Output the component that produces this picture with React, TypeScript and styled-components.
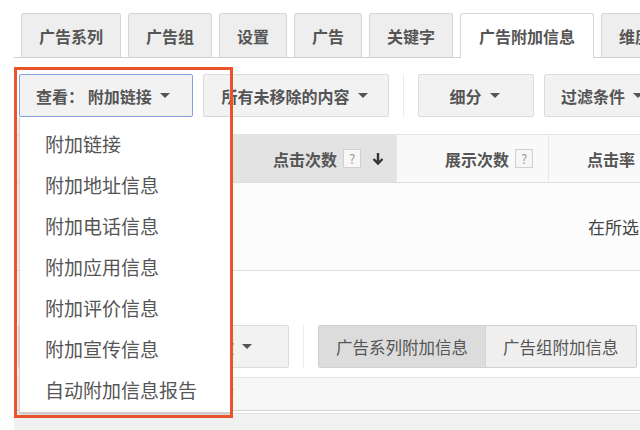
import React from "react";
import styled, { createGlobalStyle } from "styled-components";

const GlobalStyle = createGlobalStyle`
  html, body {
    margin: 0;
    padding: 0;
    background: #fff;
  }
  body {
    font-family: "Noto Sans CJK SC", "Noto Sans", sans-serif;
    color: #555;
    overflow: hidden;
  }
`;

const Page = styled.div`
  position: relative;
  width: 640px;
  height: 430px;
  overflow: hidden;
  box-sizing: border-box;
  padding: 13px 0 0 14px;
  white-space: nowrap;
`;

const TabBar = styled.div`
  display: flex;
  gap: 7px;
  padding-left: 7px;
  height: 44px;
  width: 720px;
  border-bottom: 1px solid #d0d0d0;
`;

const Tab = styled.div<{ $active?: boolean }>`
  position: relative;
  box-sizing: border-box;
  height: ${(p) => (p.$active ? "45px" : "44px")};
  padding: 0 ${(p) => (p.$active ? 18 : 17)}px;
  display: flex;
  align-items: center;
  font-size: 16px;
  font-weight: bold;
  color: #555;
  border: 1px solid #d6d6d6;
  border-bottom: none;
  border-radius: 3px 3px 0 0;
  background: ${(p) => (p.$active ? "#fff" : "#eeeeee")};
`;

const Toolbar = styled.div`
  display: flex;
  align-items: center;
  gap: 10px;
  margin-top: 16px;
  padding-left: 5px;
  height: 43px;
  width: 800px;
`;

const ToolButton = styled.div<{ $focused?: boolean; $width?: number; $align?: "start" | "end" }>`
  box-sizing: border-box;
  flex: none;
  width: ${(p) => (p.$width ? `${p.$width}px` : "auto")};
  height: 43px;
  display: flex;
  align-items: center;
  justify-content: ${(p) =>
    p.$align === "end" ? "flex-end" : p.$align === "start" ? "flex-start" : "center"};
  gap: 8px;
  padding: ${(p) => (p.$align === "end" ? "0 36px 0 16px" : "0 19px 0 16px")};
  border: 1px solid ${(p) => (p.$focused ? "#86a2de" : "#dcdcdc")};
  border-radius: 2px;
  background: #f2f2f2;
  font-size: 16px;
  font-weight: bold;
  color: #555;
`;

const Caret = styled.span`
  width: 0;
  height: 0;
  border-left: 5px solid transparent;
  border-right: 5px solid transparent;
  border-top: 5px solid #555;
`;

const Divider = styled.div`
  width: 1px;
  height: 43px;
  margin: 0 4px;
  background: #ececec;
`;

const DropdownWrap = styled.div`
  position: relative;
  z-index: 4;
`;

const Menu = styled.div`
  position: absolute;
  top: 43px;
  left: 0;
  width: 212px;
  height: 296px;
  box-sizing: border-box;
  padding-top: 6px;
  background: #fff;
  border: 1px solid #d2d2d2;
  border-top: none;
  box-shadow: 0 2px 4px rgba(0, 0, 0, 0.15);
`;

const MenuItem = styled.div`
  height: 41px;
  line-height: 41px;
  padding-left: 25px;
  font-size: 19px;
  color: #555;
`;

const Highlight = styled.div`
  position: absolute;
  left: 14px;
  top: 67px;
  width: 219px;
  height: 351px;
  box-sizing: border-box;
  border: 3px solid #e9542d;
  z-index: 5;
  pointer-events: none;
`;

const Table = styled.div`
  margin-top: 17px;
  width: 720px;
  border-top: 1px solid #e4e4e4;
  border-bottom: 1px solid #dedede;
`;

const HeaderRow = styled.div`
  display: grid;
  grid-template-columns: 219px 164px 152px 126px 1fr;
  height: 47px;
  border-bottom: 1px solid #dddddd;
`;

const HeaderCell = styled.div<{ $sorted?: boolean; $pad?: number }>`
  display: flex;
  align-items: center;
  justify-content: flex-end;
  gap: 6px;
  padding-right: ${(p) => p.$pad ?? 15}px;
  background: ${(p) => (p.$sorted ? "#e3e3e3" : "#f9f9f9")};
  border-right: 1px solid #e8e8e8;
  font-size: 16px;
  font-weight: bold;
  color: #555;
`;

const HelpBox = styled.span`
  box-sizing: border-box;
  width: 18px;
  height: 19px;
  display: inline-flex;
  align-items: center;
  justify-content: center;
  border: 1px solid #d0d0d0;
  background: #f7f7f7;
  color: #9a9a9a;
  font-size: 13px;
  font-weight: normal;
`;

const ArrowSlot = styled.span`
  display: inline-flex;
  margin-left: 5px;
`;

const EmptyRow = styled.div`
  height: 87px;
  display: flex;
  align-items: center;
  padding-left: 574px;
  background: #fcfcfc;
  font-size: 17px;
  color: #444;
`;

const LowerToolbar = styled(Toolbar)`
  margin-top: 54px;
  padding-left: 4px;
`;

const Segmented = styled.div`
  display: flex;
  height: 43px;
  box-sizing: border-box;
  border: 1px solid #d0d0d0;
  border-radius: 2px;
  overflow: hidden;
`;

const Segment = styled.div<{ $pressed?: boolean }>`
  display: flex;
  align-items: center;
  padding: 0 17px;
  font-size: 16.5px;
  color: #555;
  background: ${(p) => (p.$pressed ? "#dcdcdc" : "#efefef")};
  border-right: 1px solid #d4d4d4;
  &:last-child {
    border-right: none;
  }
`;

const InfoBand = styled.div`
  margin-top: 9px;
  width: 720px;
  height: 34px;
  display: flex;
  align-items: center;
  padding-left: 188px;
  box-sizing: border-box;
  background: #f6f6f6;
  border-top: 1px solid #e6e6e6;
  border-bottom: 1px solid #d2d2d2;
  font-size: 16px;
  color: #666;
`;

const BottomBand = styled.div`
  margin-top: 2px;
  width: 720px;
  height: 20px;
  background: #f1f1f1;
  border-top: 1px solid #e2e2e2;
`;

const SortArrow = () => (
  <svg width="12" height="14" viewBox="0 0 12 14">
    <path d="M6 1v10.5M1.5 7L6 11.5 10.5 7" stroke="#333" strokeWidth="2.4" fill="none" />
  </svg>
);

const tabs = ["广告系列", "广告组", "设置", "广告", "关键字", "广告附加信息", "维度"];
const menuItems = [
  "附加链接",
  "附加地址信息",
  "附加电话信息",
  "附加应用信息",
  "附加评价信息",
  "附加宣传信息",
  "自动附加信息报告",
];

export default function App() {
  return (
    <>
      <GlobalStyle />
      <Page>
        <TabBar>
          {tabs.map((t) => (
            <Tab key={t} $active={t === "广告附加信息"}>
              {t}
            </Tab>
          ))}
        </TabBar>

        <Toolbar>
          <DropdownWrap>
            <ToolButton $focused $width={174} $align="start">
              查看： 附加链接 <Caret />
            </ToolButton>
            <Menu>
              {menuItems.map((m) => (
                <MenuItem key={m}>{m}</MenuItem>
              ))}
            </Menu>
          </DropdownWrap>
          <ToolButton $width={186}>
            所有未移除的内容 <Caret />
          </ToolButton>
          <Divider />
          <ToolButton $width={116}>
            细分 <Caret />
          </ToolButton>
          <ToolButton>
            过滤条件 <Caret />
          </ToolButton>
        </Toolbar>

        <Table>
          <HeaderRow>
            <HeaderCell>附加链接</HeaderCell>
            <HeaderCell $sorted $pad={12}>
              点击次数 <HelpBox>?</HelpBox>
              <ArrowSlot>
                <SortArrow />
              </ArrowSlot>
            </HeaderCell>
            <HeaderCell>
              展示次数 <HelpBox>?</HelpBox>
            </HeaderCell>
            <HeaderCell>
              点击率 <HelpBox>?</HelpBox>
            </HeaderCell>
            <HeaderCell>平均每次点击费用</HeaderCell>
          </HeaderRow>
          <EmptyRow>在所选日期范围内没有任何数据</EmptyRow>
        </Table>

        <LowerToolbar>
          <ToolButton $width={271} $align="end">
            修改 <Caret />
          </ToolButton>
          <Divider />
          <Segmented>
            <Segment $pressed>广告系列附加信息</Segment>
            <Segment>广告组附加信息</Segment>
          </Segmented>
        </LowerToolbar>

        <InfoBand>维度</InfoBand>
        <BottomBand />

        <Highlight />
      </Page>
    </>
  );
}
